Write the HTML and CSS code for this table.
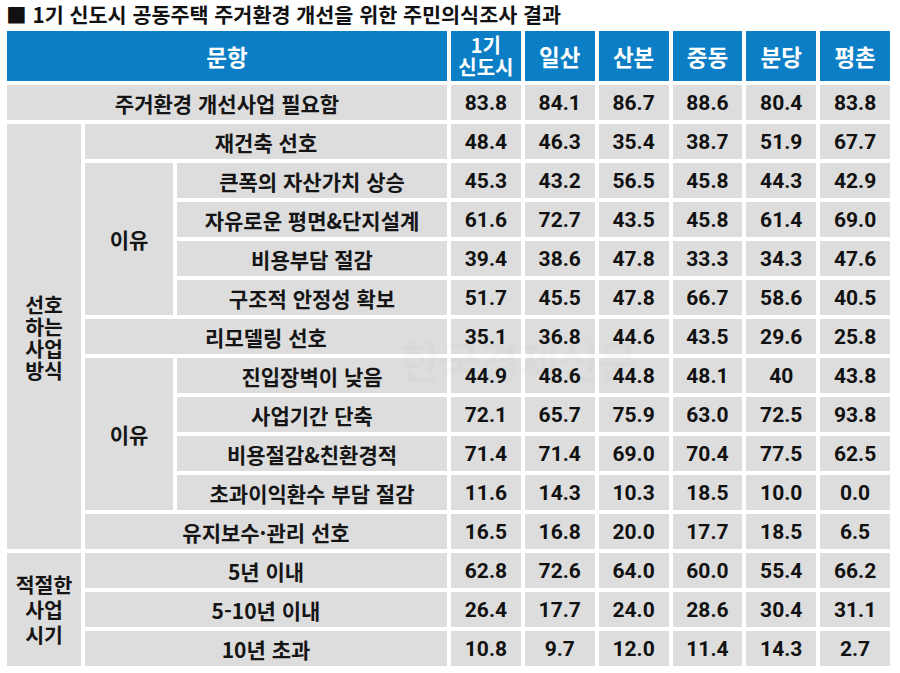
FILE: index.html
```html
<!DOCTYPE html>
<html lang="ko">
<head>
<meta charset="utf-8">
<link rel="stylesheet" href="styles.css">
</head>
<body>
<div class="page">
  <h1 class="title">■ 1기 신도시 공동주택 주거환경 개선을 위한 주민의식조사 결과</h1>
  <div class="wrap">
    <div class="grid">
      <div class="h span3">문항</div>
      <div class="h two">1기<br>신도시</div>
      <div class="h">일산</div>
      <div class="h">산본</div>
      <div class="h">중동</div>
      <div class="h">분당</div>
      <div class="h">평촌</div>

      <div class="c span3">주거환경 개선사업 필요함</div>
      <div class="n">83.8</div><div class="n">84.1</div><div class="n">86.7</div><div class="n">88.6</div><div class="n">80.4</div><div class="n">83.8</div>

      <div class="c rs11 side">선호<br>하는<br>사업<br>방식</div>
      <div class="c span2">재건축 선호</div>
      <div class="n">48.4</div><div class="n">46.3</div><div class="n">35.4</div><div class="n">38.7</div><div class="n">51.9</div><div class="n">67.7</div>

      <div class="c rs4">이유</div>
      <div class="c">큰폭의 자산가치 상승</div>
      <div class="n">45.3</div><div class="n">43.2</div><div class="n">56.5</div><div class="n">45.8</div><div class="n">44.3</div><div class="n">42.9</div>

      <div class="c">자유로운 평면&amp;단지설계</div>
      <div class="n">61.6</div><div class="n">72.7</div><div class="n">43.5</div><div class="n">45.8</div><div class="n">61.4</div><div class="n">69.0</div>

      <div class="c">비용부담 절감</div>
      <div class="n">39.4</div><div class="n">38.6</div><div class="n">47.8</div><div class="n">33.3</div><div class="n">34.3</div><div class="n">47.6</div>

      <div class="c">구조적 안정성 확보</div>
      <div class="n">51.7</div><div class="n">45.5</div><div class="n">47.8</div><div class="n">66.7</div><div class="n">58.6</div><div class="n">40.5</div>

      <div class="c span2">리모델링 선호</div>
      <div class="n">35.1</div><div class="n">36.8</div><div class="n">44.6</div><div class="n">43.5</div><div class="n">29.6</div><div class="n">25.8</div>

      <div class="c rs4">이유</div>
      <div class="c">진입장벽이 낮음</div>
      <div class="n">44.9</div><div class="n">48.6</div><div class="n">44.8</div><div class="n">48.1</div><div class="n">40</div><div class="n">43.8</div>

      <div class="c">사업기간 단축</div>
      <div class="n">72.1</div><div class="n">65.7</div><div class="n">75.9</div><div class="n">63.0</div><div class="n">72.5</div><div class="n">93.8</div>

      <div class="c">비용절감&amp;친환경적</div>
      <div class="n">71.4</div><div class="n">71.4</div><div class="n">69.0</div><div class="n">70.4</div><div class="n">77.5</div><div class="n">62.5</div>

      <div class="c">초과이익환수 부담 절감</div>
      <div class="n">11.6</div><div class="n">14.3</div><div class="n">10.3</div><div class="n">18.5</div><div class="n">10.0</div><div class="n">0.0</div>

      <div class="c span2">유지보수·관리 선호</div>
      <div class="n">16.5</div><div class="n">16.8</div><div class="n">20.0</div><div class="n">17.7</div><div class="n">18.5</div><div class="n">6.5</div>

      <div class="c rs3 side2">적절한<br>사업<br>시기</div>
      <div class="c span2">5년 이내</div>
      <div class="n">62.8</div><div class="n">72.6</div><div class="n">64.0</div><div class="n">60.0</div><div class="n">55.4</div><div class="n">66.2</div>

      <div class="c span2">5-10년 이내</div>
      <div class="n">26.4</div><div class="n">17.7</div><div class="n">24.0</div><div class="n">28.6</div><div class="n">30.4</div><div class="n">31.1</div>

      <div class="c span2">10년 초과</div>
      <div class="n">10.8</div><div class="n">9.7</div><div class="n">12.0</div><div class="n">11.4</div><div class="n">14.3</div><div class="n">2.7</div>
    </div>
    <div class="watermark">한국경제신문</div>
  </div>
</div>
</body>
</html>
```
FILE: styles.css
```css
html, body {
  margin: 0;
  padding: 0;
  background: #ffffff;
}
.page {
  width: 900px;
  height: 673px;
  overflow: hidden;
  font-family: "Noto Sans CJK KR", "Noto Sans", sans-serif;
  color: #151515;
}
.title {
  margin: 0;
  padding: 0 0 0 6px;
  height: 31px;
  font-size: 20.7px;
  line-height: 28px;
  font-weight: 700;
  color: #111;
  white-space: nowrap;
}
.wrap {
  position: relative;
  margin-left: 7px;
  width: 883px;
}
.grid {
  display: grid;
  grid-template-columns: 74px 88px 270px repeat(6, 1fr);
  grid-template-rows: 50px repeat(15, 35px);
  gap: 4px;
}
.grid > div {
  display: flex;
  align-items: center;
  justify-content: center;
  text-align: center;
}
.h {
  background: #0b7ec5;
  color: #ffffff;
  font-size: 22.5px;
  font-weight: 700;
}
.h.two {
  font-size: 20px;
  line-height: 22px;
}
.c {
  background: #dddddd;
  font-size: 21px;
  font-weight: 700;
}
.n {
  background: #dddddd;
  font-family: Roboto, "Liberation Sans", sans-serif;
  font-size: 21px;
  font-weight: 700;
  color: #111;
}
.span3 { grid-column: span 3; }
.span2 { grid-column: span 2; }
.rs11 { grid-row: span 11; }
.rs4 { grid-row: span 4; }
.rs3 { grid-row: span 3; }
.side { line-height: 22px; font-size: 20.5px; }
.side2 { line-height: 25px; font-size: 20.5px; }
.watermark {
  position: absolute;
  left: 393px;
  top: 297px;
  font-size: 44px;
  font-weight: 700;
  color: rgba(110, 110, 110, 0.055);
  letter-spacing: -1px;
  pointer-events: none;
}
```
